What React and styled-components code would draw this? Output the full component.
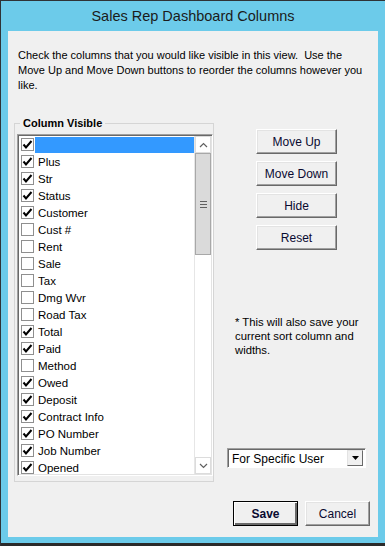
import React from 'react';
import styled, { createGlobalStyle } from 'styled-components';

const UI = '"Liberation Sans", Arial, sans-serif';

const GlobalStyle = createGlobalStyle`
  html, body {
    margin: 0;
    padding: 0;
    background: #2b2b2b;
  }
  * {
    box-sizing: border-box;
  }
`;

const Window = styled.div`
  width: 385px;
  height: 546px;
  background: #6ccbea;
  border-top: 1px solid #2f3336;
  border-left: 1px solid #2f3336;
  display: flex;
  flex-direction: column;
  overflow: hidden;
`;

const TitleBar = styled.div`
  height: 30px;
  display: flex;
  align-items: center;
  justify-content: center;
  font: 14.5px ${UI};
  color: #1b1b1b;
`;

const Client = styled.div`
  margin: 0 7px;
  height: 506px;
  flex-shrink: 0;
  background: #f0f0f0;
  padding: 17px 8px 11px 10px;
  display: flex;
  flex-direction: column;
`;

const BottomEdge = styled.div`
  margin-top: auto;
  height: 3px;
  background: #2b2b2b;
`;

const Description = styled.p`
  margin: 0;
  font: 11px/15px ${UI};
  white-space: nowrap;
  color: #000;
`;

const Body = styled.div`
  margin-top: 24px;
  height: 365px;
  display: flex;
`;

const GroupBox = styled.fieldset`
  margin: 0 0 0 -4px;
  width: 200px;
  height: 365px;
  min-width: 0;
  border: 1px solid #d5d5d5;
  padding: 0 1px 5px 2px;
`;

const Legend = styled.legend`
  margin-left: 3px;
  padding: 0 3px;
  font: bold 11px/13px ${UI};
  color: #000;
`;

const ListBox = styled.div`
  margin-top: 4px;
  height: 342px;
  width: 196px;
  border: 1px solid;
  border-color: #a0a0a0 #ffffff #ffffff #a0a0a0;
  box-shadow: inset 1px 1px #696969, inset -1px -1px #e3e3e3;
  background: #fff;
  padding: 1px;
  display: flex;
  overflow: hidden;
`;

const Items = styled.div`
  flex: 1;
  overflow: hidden;
`;

const Row = styled.div`
  height: 17px;
  display: flex;
  align-items: center;
`;

const Check = styled.span`
  width: 13px;
  height: 13px;
  margin-left: 2px;
  border: 1px solid #8f8f8f;
  background: #fff;
  display: flex;
  align-items: center;
  justify-content: center;
  flex-shrink: 0;
`;

const ItemLabel = styled.span`
  flex: 1;
  height: 16px;
  margin-left: 1px;
  padding-left: 3px;
  display: flex;
  align-items: center;
  font: 11.5px ${UI};
  color: #000;
  background: ${(p) => (p.$selected ? '#3399ff' : 'transparent')};
`;

const ScrollBar = styled.div`
  width: 17px;
  display: flex;
  flex-direction: column;
  background: #fff;
  border-left: 1px solid #e6e6e6;
`;

const ScrollButton = styled.div`
  height: 17px;
  display: flex;
  align-items: center;
  justify-content: center;
  background: #fff;
  border: 1px solid #dcdcdc;
`;

const Thumb = styled.div`
  height: 102px;
  background: #dadada;
  border: 1px solid #a8a8a8;
  display: flex;
  flex-direction: column;
  align-items: center;
  justify-content: center;
  gap: 2px;
`;

const Grip = styled.span`
  width: 7px;
  height: 1px;
  background: #606060;
`;

const Track = styled.div`
  flex: 1;
`;

const RightColumn = styled.div`
  margin-left: 13px;
  width: 139px;
  display: flex;
  flex-direction: column;
  padding-top: 12px;
`;

const ActionButton = styled.button`
  width: 81px;
  height: 25px;
  margin: 0 0 7px 29px;
  padding: 0;
  background: #f0f0f0;
  border: 1px solid;
  border-color: #ffffff #696969 #696969 #ffffff;
  box-shadow: inset -1px -1px #a0a0a0, inset 1px 1px #e3e3e3;
  font: 12px ${UI};
  color: #0a0a30;
`;

const Note = styled.p`
  margin: 58px 0 0 8px;
  font: 11.3px/14px ${UI};
  white-space: nowrap;
  color: #000;
`;

const Combo = styled.div`
  margin-top: 91px;
  height: 20px;
  display: flex;
  align-items: center;
  background: #fff;
  border: 1px solid;
  border-color: #a0a0a0 #ffffff #ffffff #a0a0a0;
  box-shadow: inset 1px 1px #696969;
  padding: 2px 2px 2px 4px;
  font: 12px ${UI};
  color: #000;
`;

const ComboText = styled.span`
  flex: 1;
  padding-top: 1px;
`;

const ComboButton = styled.span`
  width: 16px;
  height: 16px;
  background: #f0f0f0;
  border: 1px solid;
  border-color: #e3e3e3 #696969 #696969 #e3e3e3;
  display: flex;
  align-items: center;
  justify-content: center;
`;

const Footer = styled.div`
  margin-top: 19px;
  display: flex;
  justify-content: flex-end;
  gap: 7px;
`;

const DialogButton = styled.button`
  width: 65px;
  height: 25px;
  padding: 0;
  background: #f0f0f0;
  border: 1px solid;
  border-color: ${(p) => (p.$default ? '#000' : '#ffffff #696969 #696969 #ffffff')};
  box-shadow: ${(p) =>
    p.$default
      ? 'inset 1px 1px #fff, inset -2px -2px #696969'
      : 'inset -1px -1px #a0a0a0, inset 1px 1px #e3e3e3'};
  font: ${(p) => (p.$default ? 'bold' : 'normal')} 12px ${UI};
  color: #0a0a30;
`;

const columns = [
  { name: '', on: true, selected: true },
  { name: 'Plus', on: true },
  { name: 'Str', on: true },
  { name: 'Status', on: true },
  { name: 'Customer', on: true },
  { name: 'Cust #', on: false },
  { name: 'Rent', on: false },
  { name: 'Sale', on: false },
  { name: 'Tax', on: false },
  { name: 'Dmg Wvr', on: false },
  { name: 'Road Tax', on: false },
  { name: 'Total', on: true },
  { name: 'Paid', on: true },
  { name: 'Method', on: false },
  { name: 'Owed', on: true },
  { name: 'Deposit', on: true },
  { name: 'Contract Info', on: true },
  { name: 'PO Number', on: true },
  { name: 'Job Number', on: true },
  { name: 'Opened', on: true },
];

const CheckMark = () => (
  <svg width="11" height="11" viewBox="0 0 11 11">
    <path d="M1.5 5.5 L4 8.5 L9.5 2" fill="none" stroke="#000" strokeWidth="2" />
  </svg>
);

const Chevron = ({ down }) => (
  <svg width="9" height="6" viewBox="0 0 9 6">
    <polyline
      points={down ? '1,1 4.5,4.5 8,1' : '1,5 4.5,1.5 8,5'}
      fill="none"
      stroke="#606060"
      strokeWidth="1.2"
    />
  </svg>
);

const App = () => {
  return (
    <>
      <GlobalStyle />
      <Window>
        <TitleBar>Sales Rep Dashboard Columns</TitleBar>
        <Client>
          <Description>
            Check the columns that you would like visible in this view.&nbsp; Use the
            <br />
            Move Up and Move Down buttons to reorder the columns however you
            <br />
            like.
          </Description>
          <Body>
            <GroupBox>
              <Legend>Column Visible</Legend>
              <ListBox>
                <Items>
                  {columns.map((col, i) => (
                    <Row key={i}>
                      <Check>{col.on && <CheckMark />}</Check>
                      <ItemLabel $selected={col.selected}>{col.name}</ItemLabel>
                    </Row>
                  ))}
                </Items>
                <ScrollBar>
                  <ScrollButton>
                    <Chevron />
                  </ScrollButton>
                  <Thumb>
                    <Grip />
                    <Grip />
                    <Grip />
                  </Thumb>
                  <Track />
                  <ScrollButton>
                    <Chevron down />
                  </ScrollButton>
                </ScrollBar>
              </ListBox>
            </GroupBox>
            <RightColumn>
              <ActionButton>Move Up</ActionButton>
              <ActionButton>Move Down</ActionButton>
              <ActionButton>Hide</ActionButton>
              <ActionButton>Reset</ActionButton>
              <Note>
                * This will also save your
                <br />
                current sort column and
                <br />
                widths.
              </Note>
              <Combo>
                <ComboText>For Specific User</ComboText>
                <ComboButton>
                  <svg width="7" height="4" viewBox="0 0 7 4">
                    <polygon points="0,0 7,0 3.5,4" fill="#000" />
                  </svg>
                </ComboButton>
              </Combo>
            </RightColumn>
          </Body>
          <Footer>
            <DialogButton $default>Save</DialogButton>
            <DialogButton>Cancel</DialogButton>
          </Footer>
        </Client>
        <BottomEdge />
      </Window>
    </>
  );
};

export default App;
